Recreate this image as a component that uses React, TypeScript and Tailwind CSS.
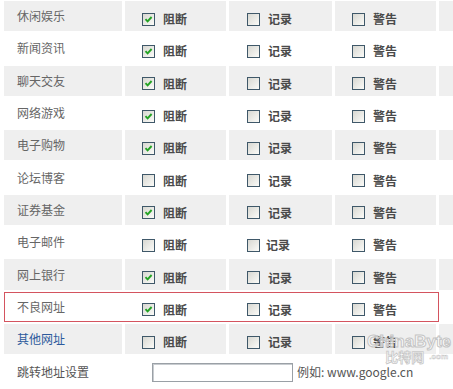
import React from "react";

type Row = { name: string; block: boolean; link?: boolean; alert?: boolean; tight?: boolean };

const rows: Row[] = [
  { name: "休闲娱乐", block: true },
  { name: "新闻资讯", block: true },
  { name: "聊天交友", block: true },
  { name: "网络游戏", block: true },
  { name: "电子购物", block: true },
  { name: "论坛博客", block: false },
  { name: "证券基金", block: true },
  { name: "电子邮件", block: false, tight: true },
  { name: "网上银行", block: true },
  { name: "不良网址", block: true, alert: true },
  { name: "其他网址", block: false, link: true },
];

function Box({ checked }: { checked?: boolean }) {
  return (
    <span className="relative inline-block w-[13px] h-[13px] shrink-0 border border-[#3f5869] bg-gradient-to-br from-[#d8d8d2] to-[#fbfbf8]">
      {checked && (
        <svg viewBox="0 0 11 11" className="absolute inset-0 w-[11px] h-[11px]">
          <path d="M2.5 5.2 L4.6 7.4 L8.6 3" fill="none" stroke="#23a323" strokeWidth="1.9" />
        </svg>
      )}
    </span>
  );
}

function Opt({ label, checked, pad, gap }: { label: string; checked?: boolean; pad: string; gap: string }) {
  return (
    <div className={`flex h-full items-center pt-[6px] ${pad} ${gap}`}>
      <Box checked={checked} />
      <span className="font-bold text-[#4a4a4a]">{label}</span>
    </div>
  );
}

export default function App() {
  return (
    <div
      className="relative w-[453px] h-[389px] overflow-hidden bg-white text-[12px] leading-none"
      style={{ fontFamily: '"Noto Sans CJK SC", "Noto Sans", sans-serif' }}
    >
      <div className="flex flex-col gap-[2px] pt-[1px] pl-[4px]">
        {rows.map((r, i) => {
          const shade = i % 2 === 0 ? "bg-[#efefef]" : "bg-white";
          return (
            <div key={r.name} className="flex gap-[3px] h-[30.3px]">
              <div
                className={`flex gap-[3px] h-full ${
                  r.alert ? "w-[435px] outline outline-1 -outline-offset-1 outline-[#d4545f]" : ""
                }`}
              >
                <div className={`w-[118px] flex items-center pl-[13px] ${shade}`}>
                  <span className={r.link ? "text-[#2c5a9c]" : "text-[#666666]"}>{r.name}</span>
                </div>
                <div className={`w-[101px] ${shade}`}>
                  <Opt label="阻断" checked={r.block} pad="pl-[17px]" gap="gap-[8px]" />
                </div>
                <div className={`w-[103px] ${shade}`}>
                  <Opt label="记录" pad="pl-[18px]" gap={r.tight ? "gap-[6px]" : "gap-[8px]"} />
                </div>
                <div className={`w-[101px] ${shade}`}>
                  <Opt label="警告" pad="pl-[17px]" gap="gap-[8px]" />
                </div>
              </div>
              <div className={`flex-1 ${shade}`} />
            </div>
          );
        })}
        <div className="flex items-center h-[32px]">
          <div className="w-[121px] pl-[13px] text-[#555555]">跳转地址设置</div>
          <input
            type="text"
            className="ml-[27px] w-[141px] h-[19px] border border-[#9aa0a6] shadow-[inset_1px_1px_0_#c8ccd0] bg-white outline-none"
          />
          <span className="ml-[4px] text-[#555555]" style={{ fontFamily: '"Noto Sans CJK SC", "Liberation Sans", sans-serif' }}>
            例如: www.google.cn
          </span>
        </div>
      </div>

      <div className="absolute left-[352px] top-[334px] w-[99px] flex flex-col items-end pointer-events-none">
        <span
          className="text-[17px] leading-[16px] font-bold text-white/70 [-webkit-text-stroke:1px_#c4c4c4]"
          style={{ fontFamily: '"Liberation Sans", sans-serif' }}
        >
          ChinaByte
        </span>
        <div className="flex items-end gap-[5px] pr-[3px]">
          <span className="text-[13px] leading-[13px] font-bold text-white/70 [-webkit-text-stroke:0.8px_#c8c8c8]">比特网</span>
          <span
            className="text-[8px] leading-[8px] font-bold text-white [-webkit-text-stroke:0.5px_#c8c8c8] mb-[2px]"
            style={{ fontFamily: '"Liberation Sans", sans-serif' }}
          >
            .com
          </span>
        </div>
      </div>
    </div>
  );
}
